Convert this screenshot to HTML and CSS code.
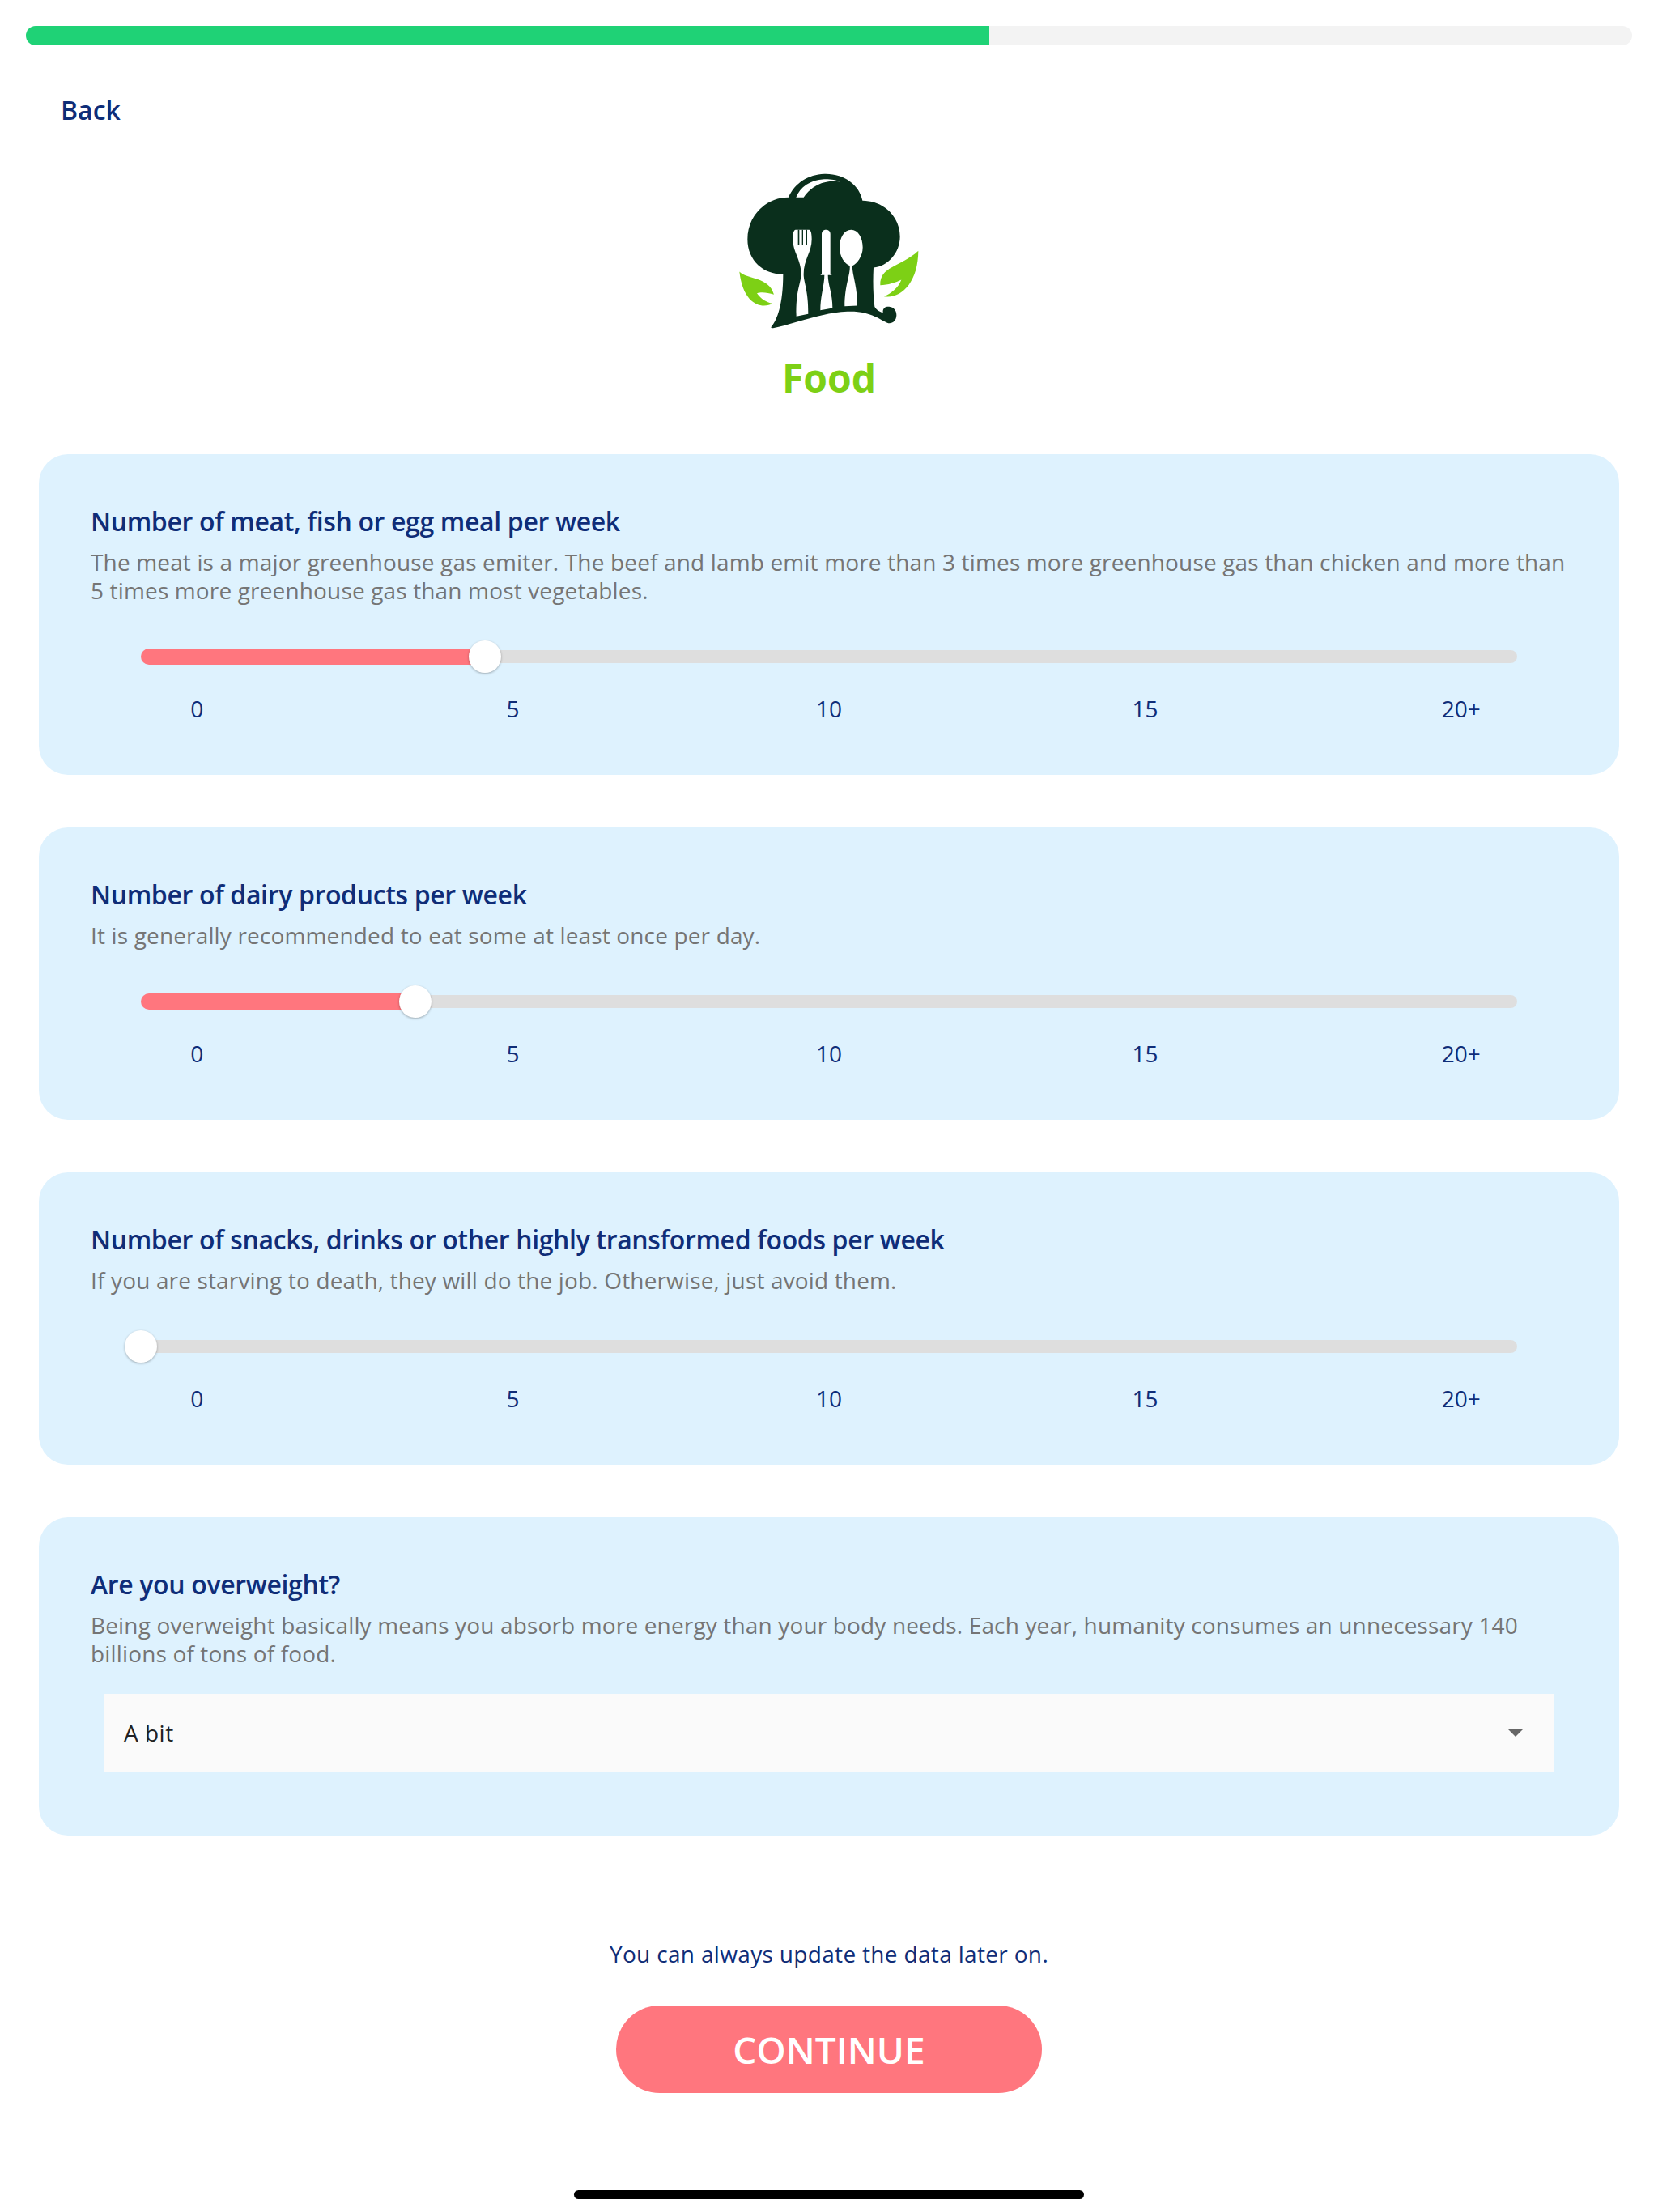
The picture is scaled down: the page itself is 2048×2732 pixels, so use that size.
FILE: index.html
```html
<!DOCTYPE html>
<html lang="en">
<head>
    <meta charset="UTF-8">
    <meta name="viewport" content="width=device-width, initial-scale=1.0">
    <title>Food</title>
    <link rel="stylesheet" href="styles.css">
</head>
<body>
    <div class="progress"><div class="progress-fill"></div></div>

    <a class="back-link">Back</a>

    <div class="page-header">
        <svg class="food-logo" viewBox="90 70 690 590" aria-hidden="true">
            <path class="logo-dark" d="M218 645 C240 620 262 560 262 450 C190 450 130 400 130 320 C130 230 200 165 282 165 C305 110 360 78 420 78 C490 78 545 120 556 177 C640 178 695 240 695 310 C695 370 650 420 597 425 C594 480 596 530 601 570 C606 580 618 590 632 592 C630 575 642 568 655 570 C672 572 683 585 682 603 C681 622 668 633 652 631 C620 620 590 585 500 588 C400 592 300 635 225 649 C219 650 216 648 218 645 Z"/>
            <path class="logo-white" d="M310 165 C325 125 365 98 420 97 C440 97 460 100 472 106 C430 100 375 110 338 165 Z"/>
            <path class="logo-white" d="M298 320 C298 300 301 285 308 285 L358 285 C365 285 368 300 368 320 C368 368 338 395 338 450 C338 480 356 510 355 597 L311 606 C308 510 329 480 329 450 C329 395 298 368 298 320 Z"/>
            <path class="logo-dark" d="M317 285h5v55h-5z M332 285h4v55h-4z M346 285h5v55h-5z"/>
            <path class="logo-white" d="M405 300 C405 280 437 280 437 300 L437 448 L443 453 L428 453 C428 490 445 520 445 575 L400 583 C400 530 415 490 415 453 L400 453 L405 448 Z"/>
            <path class="logo-white" d="M514 285 C540 285 557 315 557 350 C557 385 535 410 519 418 C517 450 537 490 537 566 L490 568 C490 490 512 450 509 418 C490 410 471 385 471 350 C471 315 488 285 514 285 Z"/>
            <path class="logo-green" d="M100 440 C130 470 210 458 228 525 C205 517 180 515 165 520 C180 542 200 553 222 558 C190 578 115 570 100 440 Z"/>
            <path class="logo-green" d="M763 363 C762 480 700 542 636 532 C660 522 690 500 700 470 C680 480 650 490 622 490 C620 420 695 425 763 363 Z"/>
        </svg>
        <h1>Food</h1>
    </div>

    <section class="card">
        <h2>Number of meat, fish or egg meal per week</h2>
        <p>The meat is a major greenhouse gas emiter. The beef and lamb emit more than 3 times more greenhouse gas than chicken and more than 5 times more greenhouse gas than most vegetables.</p>
        <div class="slider">
            <div class="slider-fill" style="width: 425px"></div>
            <div class="slider-thumb" style="left: 425px"></div>
        </div>
        <div class="ticks"><span>0</span><span>5</span><span>10</span><span>15</span><span>20+</span></div>
    </section>

    <section class="card">
        <h2>Number of dairy products per week</h2>
        <p>It is generally recommended to eat some at least once per day.</p>
        <div class="slider">
            <div class="slider-fill" style="width: 339px"></div>
            <div class="slider-thumb" style="left: 339px"></div>
        </div>
        <div class="ticks"><span>0</span><span>5</span><span>10</span><span>15</span><span>20+</span></div>
    </section>

    <section class="card">
        <h2>Number of snacks, drinks or other highly transformed foods per week</h2>
        <p>If you are starving to death, they will do the job. Otherwise, just avoid them.</p>
        <div class="slider">
            <div class="slider-thumb" style="left: 0px"></div>
        </div>
        <div class="ticks"><span>0</span><span>5</span><span>10</span><span>15</span><span>20+</span></div>
    </section>

    <section class="card card-select">
        <h2>Are you overweight?</h2>
        <p>Being overweight basically means you absorb more energy than your body needs. Each year, humanity consumes an unnecessary 140 billions of tons of food.</p>
        <div class="select-box">
            <span>A bit</span>
            <span class="select-arrow"></span>
        </div>
    </section>

    <div class="footer">
        <div class="footer-note">You can always update the data later on.</div>
        <button class="continue-btn">CONTINUE</button>
        <div class="home-bar"></div>
    </div>
</body>
</html>
```

FILE: styles.css
```css
* {
    margin: 0;
    padding: 0;
    box-sizing: border-box;
}

body {
    font-family: 'Open Sans', 'Noto Sans', sans-serif;
    background: #ffffff;
    color: #0f2d78;
    width: 2048px;
    height: 2732px;
    padding-top: 32px;
    overflow: hidden;
}

.progress {
    height: 24px;
    margin: 0 32px;
    background: #f3f3f3;
    border-radius: 12px;
}

.progress-fill {
    width: 1190px;
    height: 100%;
    background: #1fd276;
    border-radius: 12px 0 0 12px;
}

.back-link {
    display: block;
    margin: 58px 0 0 75px;
    font-size: 32px;
    line-height: 44px;
    font-weight: 600;
}

.page-header {
    display: flex;
    flex-direction: column;
    align-items: center;
    margin-top: 54px;
}

.food-logo {
    display: block;
    width: 230px;
    height: 197px;
    margin-left: 2px;
}

.logo-dark {
    fill: #0a2f1c;
}

.logo-white {
    fill: #ffffff;
}

.logo-green {
    fill: #7dd015;
}

.page-header h1 {
    margin-top: 27px;
    font-size: 48px;
    line-height: 62px;
    font-weight: 700;
    color: #7dd015;
}

.card {
    margin: 65px 48px 0;
    height: 361px;
    padding: 61px 64px 0;
    background: #def2fe;
    border-radius: 36px;
}

.page-header + .card {
    margin-top: 63px;
    height: 396px;
}

.card h2 {
    font-size: 32px;
    line-height: 44px;
    font-weight: 600;
    letter-spacing: -0.35px;
}

.card p {
    margin-top: 11px;
    font-size: 28px;
    line-height: 35px;
    letter-spacing: 0.15px;
    color: #757575;
}

.slider {
    position: relative;
    height: 16px;
    margin: 56px 62px 0;
    background: #dedede;
    border-radius: 8px;
}

.slider-fill {
    position: absolute;
    top: -2px;
    left: 0;
    height: 20px;
    background: #ff767e;
    border-radius: 10px 0 0 10px;
}

.slider-thumb {
    position: absolute;
    top: -12px;
    width: 40px;
    height: 40px;
    margin-left: -20px;
    background: #ffffff;
    border-radius: 50%;
    box-shadow: 0 1px 3px rgba(0, 0, 0, 0.3);
}

.ticks {
    display: grid;
    grid-template-columns: repeat(5, 1fr);
    margin: 37px -64px 0;
    font-size: 28px;
    line-height: 38px;
    text-align: center;
}

.card-select {
    height: 393px;
}

.select-box {
    display: flex;
    align-items: center;
    justify-content: space-between;
    height: 96px;
    margin: 32px 16px 0;
    padding: 0 38px 0 25px;
    background: #fafafa;
    font-size: 28px;
    letter-spacing: 0.5px;
    color: #212121;
}

.select-arrow {
    width: 0;
    height: 0;
    border-left: 10px solid transparent;
    border-right: 10px solid transparent;
    border-top: 10px solid #666666;
}

.footer {
    display: flex;
    flex-direction: column;
    align-items: center;
}

.footer-note {
    margin-top: 126px;
    font-size: 28px;
    line-height: 40px;
    letter-spacing: 0.33px;
}

.continue-btn {
    width: 526px;
    height: 108px;
    margin-top: 44px;
    background: #ff767e;
    color: #ffffff;
    border: none;
    border-radius: 54px;
    font-family: inherit;
    font-size: 46px;
    font-weight: 600;
}

.home-bar {
    width: 630px;
    height: 11px;
    margin-top: 120px;
    background: #000000;
    border-radius: 6px;
}
```
